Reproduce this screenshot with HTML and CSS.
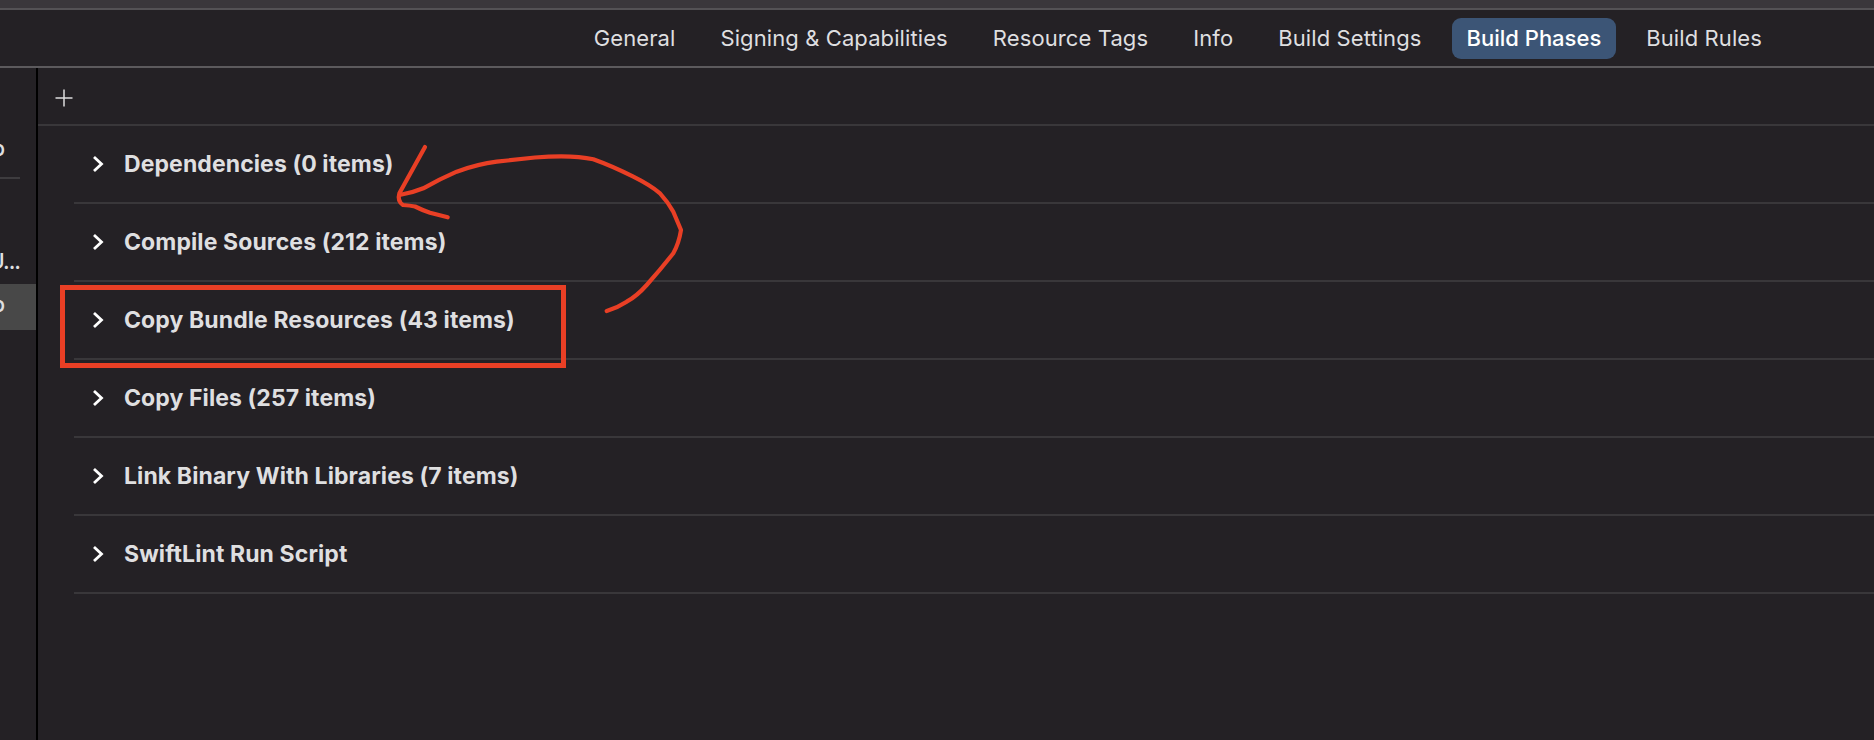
FILE: index.html
```html
<!DOCTYPE html>
<html lang="en">
<head>
<meta charset="utf-8">
<title>Build Phases</title>
<link rel="stylesheet" href="styles.css">
</head>
<body>
<div class="app">
  <div class="titlestrip"></div>
  <nav class="tabs">
    <span class="tab">General</span>
    <span class="tab">Signing &amp; Capabilities</span>
    <span class="tab">Resource Tags</span>
    <span class="tab">Info</span>
    <span class="tab">Build Settings</span>
    <span class="tab active">Build Phases</span>
    <span class="tab">Build Rules</span>
  </nav>
  <div class="workspace">
    <aside class="sidebar">
      <div class="side-row side-first"><span>App</span></div>
      <div class="side-rule"></div>
      <div class="side-row side-long"><span>Notification U...</span></div>
      <div class="side-row side-selected"><span>App</span></div>
    </aside>
    <main class="editor">
      <div class="toolbar">
        <svg class="plus" width="18" height="18" viewBox="0 0 18 18"><path d="M9 0.5V17.5M0.5 9H17.5"/></svg>
      </div>
      <div class="phases">
        <div class="phase"><svg class="chev" width="12" height="18" viewBox="0 0 12 18"><path d="M2 2L9.5 9L2 16"/></svg><span>Dependencies (0 items)</span></div>
        <div class="phase"><svg class="chev" width="12" height="18" viewBox="0 0 12 18"><path d="M2 2L9.5 9L2 16"/></svg><span>Compile Sources (212 items)</span></div>
        <div class="phase"><svg class="chev" width="12" height="18" viewBox="0 0 12 18"><path d="M2 2L9.5 9L2 16"/></svg><span>Copy Bundle Resources (43 items)</span></div>
        <div class="phase"><svg class="chev" width="12" height="18" viewBox="0 0 12 18"><path d="M2 2L9.5 9L2 16"/></svg><span>Copy Files (257 items)</span></div>
        <div class="phase"><svg class="chev" width="12" height="18" viewBox="0 0 12 18"><path d="M2 2L9.5 9L2 16"/></svg><span>Link Binary With Libraries (7 items)</span></div>
        <div class="phase"><svg class="chev" width="12" height="18" viewBox="0 0 12 18"><path d="M2 2L9.5 9L2 16"/></svg><span>SwiftLint Run Script</span></div>
      </div>
    </main>
  </div>
  <div class="mark-box"></div>
  <svg class="mark-arrow" width="1874" height="740" viewBox="0 0 1874 740">
    <path d="M425 147L399.500 193Q397 201 403 205Q410 205.500 415 206.500Q422 210 430 212.700L447.700 217.300"/>
    <path d="M399.500 195Q412 193 423.300 188.300Q440 179 456.700 171.700Q478 164 496.700 161.700L535 157.500Q572 154.500 593.300 159.300Q612 166 633.300 176.700Q650 185 660 193.300Q668 202 673.300 211.700L681 230Q679 243 673.300 253.300Q661 269 646.700 285Q637 296 626.700 301.700Q617 308 606.700 311"/>
  </svg>
</div>
</body>
</html>
```
FILE: styles.css
```css
* {
  box-sizing: border-box;
}

html,
body {
  margin: 0;
  height: 100%;
  background: #242125;
}

.app {
  position: relative;
  display: flex;
  flex-direction: column;
  width: 1874px;
  height: 740px;
  overflow: hidden;
  font-family: Inter, "Liberation Sans", sans-serif;
  color: #dfdfe0;
}

.titlestrip {
  flex: none;
  height: 10px;
  background: #3a373b;
  border-bottom: 2px solid #545255;
}

.tabs {
  flex: none;
  display: flex;
  align-items: center;
  justify-content: flex-end;
  height: 58px;
  padding-right: 97px;
  border-bottom: 2px solid #5c5a5d;
}

.tab {
  display: flex;
  align-items: center;
  height: 41px;
  padding: 0 15px;
  margin-left: 15px;
  border-radius: 9px;
  font-size: 22px;
  font-weight: 400;
  letter-spacing: 0.1px;
  white-space: nowrap;
}

.tab.active {
  background: #3c5576;
  color: #fff;
  font-weight: 500;
  letter-spacing: 0;
}

.workspace {
  flex: 1;
  display: flex;
  min-height: 0;
}

.sidebar {
  flex: none;
  width: 38px;
  border-right: 2px solid #000;
  overflow: hidden;
  font-size: 22px;
  font-weight: 500;
  letter-spacing: -1px;
}

.side-row {
  display: flex;
  align-items: center;
  justify-content: flex-end;
  height: 46px;
  padding-right: 32px;
  white-space: nowrap;
}

.side-first {
  margin-top: 57px;
}

.side-rule {
  width: 20px;
  height: 2px;
  margin-top: 6px;
  background: #3e3c3f;
}

.side-long {
  margin-top: 59px;
  padding-right: 16px;
}

.side-selected {
  padding-bottom: 7px;
  background: #484848;
}

.editor {
  flex: 1;
  min-width: 0;
}

.toolbar {
  display: flex;
  align-items: center;
  height: 58px;
  padding: 4px 0 0 17px;
  border-bottom: 2px solid #39373a;
}

.plus path {
  fill: none;
  stroke: #dcdcdd;
  stroke-width: 1.5;
}

.phases {
  display: flex;
  flex-direction: column;
  padding-left: 36px;
}

.phase {
  display: flex;
  align-items: center;
  gap: 20px;
  height: 78px;
  padding-left: 18px;
  border-bottom: 2px solid #39373a;
  font-size: 23px;
  font-weight: 650;
  letter-spacing: 0.1px;
}

.chev {
  flex: none;
}

.chev path {
  fill: none;
  stroke: #fff;
  stroke-width: 2.800;
}

.mark-box {
  position: absolute;
  left: 60px;
  top: 285px;
  width: 506px;
  height: 83px;
  border: 5px solid #e93f25;
}

.mark-arrow {
  position: absolute;
  left: 0;
  top: 0;
  pointer-events: none;
}

.mark-arrow path {
  fill: none;
  stroke: #e93f25;
  stroke-width: 4.200;
  stroke-linecap: round;
  stroke-linejoin: round;
}
```
